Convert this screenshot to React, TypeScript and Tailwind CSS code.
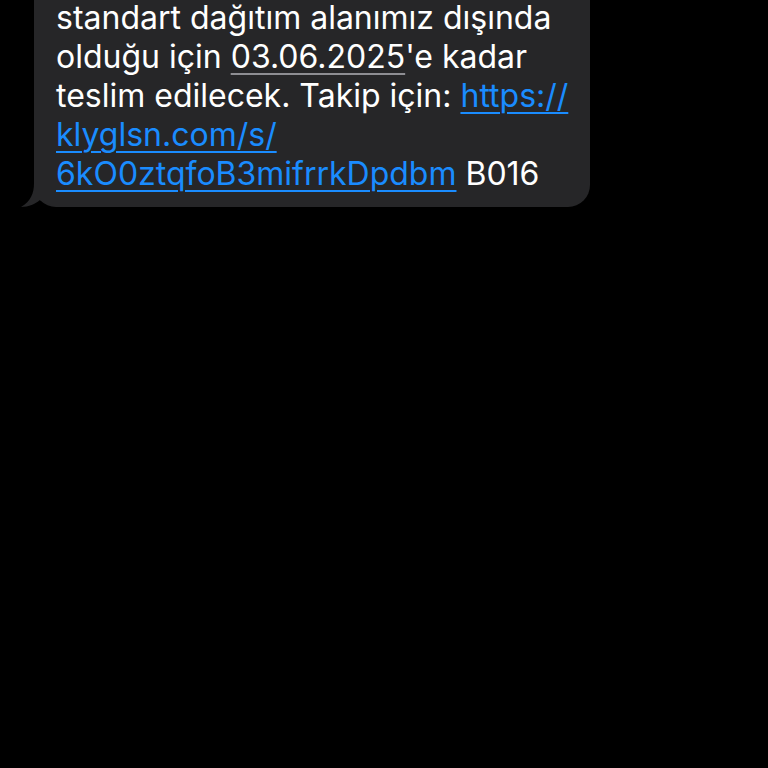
export default function App() {
  return (
    <div className="min-h-[768px] w-full overflow-hidden bg-black">
      <div className="relative ml-[34px] mt-[-40px] w-[556px]">
        <div
          className="whitespace-nowrap rounded-[22px] bg-[#262628] pb-[14px] pl-[22px] pr-4 pt-[38px] text-[32px] leading-[39px] text-white"
          style={{ fontFamily: "Inter, 'Noto Sans', sans-serif" }}
        >
          standart dağıtım alanımız dışında
          <br />
          olduğu için{" "}
          <span className="underline decoration-[#8e8e93] decoration-2 underline-offset-[5px]">
            03.06.2025
          </span>
          'e kadar
          <br />
          teslim edilecek. Takip için:{" "}
          <a className="text-[#1a8cff] underline decoration-2 underline-offset-[5px]">
            https://
          </a>
          <br />
          <a className="text-[#1a8cff] underline decoration-2 underline-offset-[5px]">
            klyglsn.com/s/
            <br />
            6kO0ztqfoB3mifrrkDpdbm
          </a>{" "}
          B016
        </div>
        {/* tail */}
        <svg
          className="absolute bottom-0 left-[-13px]"
          width="30"
          height="24"
          viewBox="0 0 30 24"
        >
          <path
            d="M13 0 C13 10 10 18 0 24 C8 24 14 21 19 17 C22 19 26 21 30 22 L30 0 Z"
            fill="#262628"
          />
        </svg>
      </div>
    </div>
  );
}
